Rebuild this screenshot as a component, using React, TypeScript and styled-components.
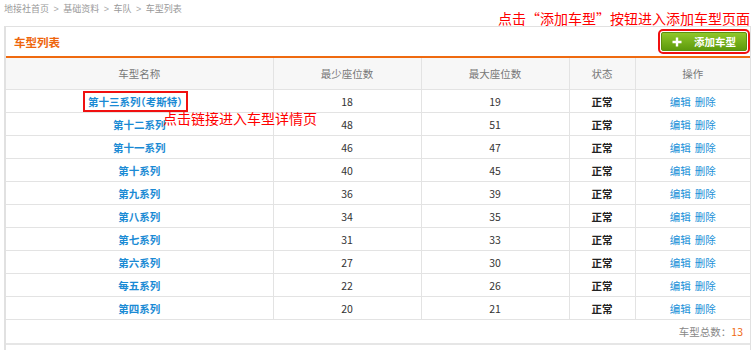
import styled, { createGlobalStyle } from 'styled-components';

const GlobalStyle = createGlobalStyle`
  body {
    margin: 0;
    background: #fff;
    font-family: "Noto Sans CJK SC", "Liberation Sans", sans-serif;
    font-size: 10.5px;
    color: #333;
  }
`;

type Model = { name: string; min: number; max: number; marked?: boolean };

const models: Model[] = [
  { name: '第十三系列（考斯特）', min: 18, max: 19, marked: true },
  { name: '第十二系列', min: 48, max: 51 },
  { name: '第十一系列', min: 46, max: 47 },
  { name: '第十系列', min: 40, max: 45 },
  { name: '第九系列', min: 36, max: 39 },
  { name: '第八系列', min: 34, max: 35 },
  { name: '第七系列', min: 31, max: 33 },
  { name: '第六系列', min: 27, max: 30 },
  { name: '每五系列', min: 22, max: 26 },
  { name: '第四系列', min: 20, max: 21 },
];

const PlusIcon = () => (
  <svg width="10" height="10" viewBox="0 0 10 10">
    <path d="M5 0.5v9M0.5 5h9" stroke="#fff" strokeWidth="2.4" />
  </svg>
);

export default function App() {
  return (
    <Page>
      <GlobalStyle />
      <Breadcrumb>
        地接社首页<Sep>&gt;</Sep>基础资料<Sep>&gt;</Sep>车队<Sep>&gt;</Sep>车型列表
      </Breadcrumb>
      <Panel>
        <PanelHeader>
          <PanelTitle>车型列表</PanelTitle>
          <AddButton>
            <PlusIcon />
            <span>添加车型</span>
          </AddButton>
        </PanelHeader>
        <Table>
          <colgroup>
            <col style={{ width: 267 }} />
            <col style={{ width: 148 }} />
            <col style={{ width: 148 }} />
            <col style={{ width: 66 }} />
            <col />
          </colgroup>
          <thead>
            <tr>
              <Th>车型名称</Th>
              <Th>最少座位数</Th>
              <Th>最大座位数</Th>
              <Th>状态</Th>
              <Th>操作</Th>
            </tr>
          </thead>
          <tbody>
            {models.map((m) => (
              <tr key={m.name}>
                <Td>
                  <NameLink $marked={m.marked}>{m.name}</NameLink>
                </Td>
                <Td>{m.min}</Td>
                <Td>{m.max}</Td>
                <Td>
                  <Status>正常</Status>
                </Td>
                <Td>
                  <Action>编辑</Action>
                  <Action>删除</Action>
                </Td>
              </tr>
            ))}
          </tbody>
        </Table>
        <Footer>
          车型总数：<Count>13</Count>
        </Footer>
        <PanelRest />
      </Panel>
      <NoteTop>点击“添加车型”按钮进入添加车型页面</NoteTop>
      <NoteLink>点击链接进入车型详情页</NoteLink>
    </Page>
  );
}

const Page = styled.div`
  position: relative;
  width: 755px;
  height: 350px;
  padding: 0 4px;
  box-sizing: border-box;
  overflow: hidden;
`;

const Breadcrumb = styled.div`
  height: 17px;
  line-height: 17px;
  margin-bottom: 9px;
  color: #999;
  font-size: 9px;
  white-space: nowrap;
`;

const Sep = styled.span`
  margin: 0 4.5px;
  font-family: "Liberation Sans", sans-serif;
  color: #aaa;
`;

const Panel = styled.div`
  width: 747px;
  box-sizing: border-box;
  border: 1px solid #e1e1e1;
  border-left-width: 2px;
`;

const PanelHeader = styled.div`
  display: flex;
  align-items: center;
  justify-content: space-between;
  height: 29px;
  padding: 0 3px 0 8px;
  border-bottom: 2px solid #ef6a10;
`;

const PanelTitle = styled.h2`
  margin: 0;
  font-size: 11.5px;
  font-weight: bold;
  color: #ee650c;
`;

const AddButton = styled.button`
  display: flex;
  align-items: center;
  gap: 12px;
  width: 86px;
  height: 19px;
  padding: 0 0 0 10px;
  border: 1px solid #5c8f0c;
  border-radius: 2px;
  background: linear-gradient(#8fc72a, #5d9a0c);
  color: #fff;
  font-family: inherit;
  font-size: 10.5px;
  font-weight: bold;
  outline: 2px solid #f01010;
  outline-offset: 1px;
  cursor: pointer;
`;

const Table = styled.table`
  width: 100%;
  border-collapse: collapse;
  table-layout: fixed;
  text-align: center;
`;

const Th = styled.th`
  height: 31px;
  padding: 0;
  background: #f7f7f7;
  border: 1px solid #e3e3e3;
  border-top: none;
  color: #777;
  font-weight: normal;
  &:first-child {
    border-left: none;
  }
  &:last-child {
    border-right: none;
  }
`;

const Td = styled.td`
  height: 22px;
  padding: 0;
  border: 1px solid #e3e3e3;
  color: #333;
  &:first-child {
    border-left: none;
  }
  &:last-child {
    border-right: none;
  }
`;

const NameLink = styled.a<{ $marked?: boolean }>`
  display: inline-block;
  padding: ${({ $marked }) => ($marked ? '1px 3px' : '0')};
  margin-right: ${({ $marked }) => ($marked ? '8px' : '0')};
  color: #1a8ad4;
  font-weight: bold;
  font-feature-settings: "halt";
  cursor: pointer;
  outline: ${({ $marked }) => ($marked ? '2px solid #f01010' : 'none')};
`;

const Status = styled.span`
  font-weight: bold;
  color: #222;
`;

const Action = styled.a`
  margin: 0 2px;
  color: #2090d8;
  cursor: pointer;
`;

const Footer = styled.div`
  height: 23px;
  line-height: 23px;
  padding-right: 7px;
  text-align: right;
  color: #888;
  border-bottom: 2px solid #e6e6e6;
`;

const Count = styled.span`
  color: #ef6a10;
`;

const PanelRest = styled.div`
  height: 20px;
`;

const NoteTop = styled.div`
  position: absolute;
  left: 498px;
  top: 9px;
  font-size: 14px;
  line-height: 18px;
  color: #f00;
  white-space: nowrap;
`;

const NoteLink = styled.div`
  position: absolute;
  left: 163px;
  top: 109px;
  font-size: 14px;
  line-height: 18px;
  color: #f00;
  white-space: nowrap;
`;
